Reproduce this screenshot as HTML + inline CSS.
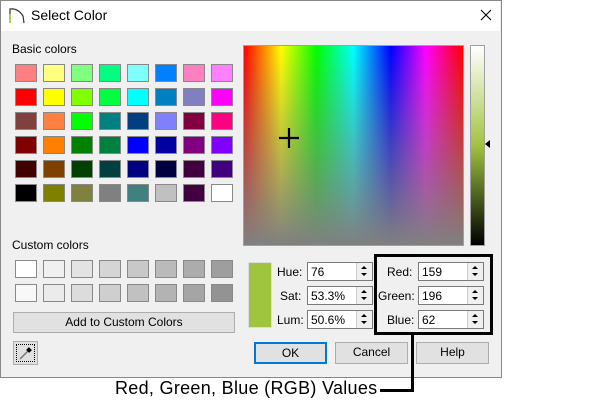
<!DOCTYPE html><html><head><style>
body{margin:0;width:602px;height:409px;background:#fff;position:relative;font-family:"Liberation Sans",sans-serif;overflow:hidden}
.a{position:absolute;box-sizing:border-box}
.dlg{left:0;top:0;width:502px;height:378px;background:#f0f0f0;border:1px solid #888}
.title{left:1px;top:1px;width:499px;height:30px;background:#fff}
.t{font-size:12px;color:#000;white-space:nowrap}
.sw{width:22px;height:18px;border:1px solid #888}
.ed{height:19px;background:#fff;border:1px solid #7a7a7a;font-size:12px;padding:2px 0 0 3px}
.sp{position:absolute;right:0;top:0;width:15px;height:17px;border-left:1px solid #ccc;background:#f0f0f0}
.sp:before{content:"";position:absolute;left:4px;top:3px;border:3px solid transparent;border-bottom:3px solid #000;border-top:0}
.sp:after{content:"";position:absolute;left:4px;top:10px;border:3px solid transparent;border-top:3px solid #000;border-bottom:0}
.btn{height:21px;background:#e1e1e1;border:1px solid #adadad;font-size:12px;text-align:center;line-height:19px}
</style></head><body>
<div class="a dlg"></div>
<div class="a title"></div>
<svg class="a" style="left:8px;top:6px" width="18" height="18"><path d="M2 17V3Q10 2 15 10L16 17" fill="none" stroke="#333" stroke-width="1.2"/><path d="M2 8V17" stroke="#9c3" stroke-width="1.5"/></svg>
<div class="a" style="left:31px;top:7px;font-size:14px">Select Color</div>
<svg class="a" style="left:480px;top:9px" width="12" height="12"><path d="M1 1L11 11M11 1L1 11" stroke="#000" stroke-width="1.1"/></svg>
<div class="a t" style="left:12px;top:42px">Basic colors</div>
<div id="g"></div>
<div class="a t" style="left:12px;top:238px">Custom colors</div>
<div class="a" style="left:243px;top:45px;width:221px;height:201px;border:1px solid #a0a0a0;background:linear-gradient(to bottom,rgba(128,128,128,0),rgb(128,128,128)),linear-gradient(to right,#f00,#ff0 17%,#0f0 33%,#0ff 50%,#00f 67%,#f0f 83%,#f00)"></div>
<svg class="a" style="left:279px;top:128px" width="20" height="20"><path d="M10 0V20M0 10H20" stroke="#000" stroke-width="2.2"/></svg>
<div class="a" style="left:470px;top:45px;width:15px;height:201px;border:1px solid #a0a0a0;background:linear-gradient(#fff,#9fc43e 50%,#000)"></div>
<div class="a" style="left:485px;top:140px;border:4px solid transparent;border-right:5px solid #000;border-left:0"></div>
<div class="a btn" style="left:13px;top:312px;width:222px">Add to Custom Colors</div>
<div class="a" style="left:13px;top:341px;width:25px;height:24px;border:1px solid #adadad;background:#e1e1e1"><div class="a" style="left:2px;top:2px;width:19px;height:18px;border:1px dotted #000"></div><svg class="a" style="left:4px;top:3px" width="16" height="16"><path d="M2 14L10 6" stroke="#777" stroke-width="1.5"/><path d="M9 4L12 7M10 3L13 6" stroke="#000" stroke-width="2.5"/></svg></div>
<div class="a" style="left:248px;top:262px;width:24px;height:66px;background:#9fc43e;border:1px solid #ddd"></div>
<div class="a t" style="left:277px;top:265px">Hue:</div>
<div class="a t" style="left:280px;top:289px">Sat:</div>
<div class="a t" style="left:277px;top:313px">Lum:</div>
<div class="a ed" style="left:307px;top:262px;width:66px">76<div class="sp"></div></div>
<div class="a ed" style="left:307px;top:286px;width:66px">53.3%<div class="sp"></div></div>
<div class="a ed" style="left:307px;top:310px;width:66px">50.6%<div class="sp"></div></div>
<div class="a t" style="left:387px;top:265px">Red:</div>
<div class="a t" style="left:378px;top:289px">Green:</div>
<div class="a t" style="left:387px;top:313px">Blue:</div>
<div class="a ed" style="left:418px;top:262px;width:66px">159<div class="sp"></div></div>
<div class="a ed" style="left:418px;top:286px;width:66px">196<div class="sp"></div></div>
<div class="a ed" style="left:418px;top:310px;width:66px">62<div class="sp"></div></div>
<div class="a" style="left:374px;top:254px;width:119px;height:81px;border:3px solid #000"></div>
<div class="a btn" style="left:254px;top:342px;width:73px;height:22px;border:2px solid #0078d7;line-height:18px">OK</div>
<div class="a btn" style="left:335px;top:342px;width:73px;height:22px">Cancel</div>
<div class="a btn" style="left:416px;top:342px;width:73px;height:22px">Help</div>
<div class="a" style="left:411px;top:334px;width:3px;height:58px;background:#000"></div>
<div class="a" style="left:380px;top:389px;width:34px;height:3px;background:#000"></div>
<div class="a" style="left:115px;top:378px;font-size:18px;letter-spacing:0.3px;white-space:nowrap">Red, Green, Blue (RGB) Values</div>
<script>
var b=[["#ff8080","#ffff80","#80ff80","#00ff80","#80ffff","#0080ff","#ff80c0","#ff80ff"],["#ff0000","#ffff00","#80ff00","#00ff40","#00ffff","#0080c0","#8080c0","#ff00ff"],["#804040","#ff8040","#00ff00","#008080","#004080","#8080ff","#800040","#ff0080"],["#800000","#ff8000","#008000","#008040","#0000ff","#0000a0","#800080","#8000ff"],["#400000","#804000","#004000","#004040","#000080","#000040","#400040","#400080"],["#000000","#808000","#808040","#808080","#408080","#c0c0c0","#400040","#ffffff"]];
var c=[["#fff","#f0f0f0","#e3e3e3","#d5d5d5","#c8c8c8","#bababa","#acacac","#9e9e9e"],["#f8f8f8","#ebebeb","#dcdcdc","#cfcfcf","#c1c1c1","#b3b3b3","#a5a5a5","#939393"]];
var h="",ys=[64,88,112,136,160,184];
b.forEach(function(r,i){r.forEach(function(x,j){h+='<div class="a sw" style="left:'+(15+j*28)+'px;top:'+ys[i]+'px;background:'+x+'"></div>'})});
c.forEach(function(r,i){r.forEach(function(x,j){h+='<div class="a sw" style="left:'+(15+j*28)+'px;top:'+(260+i*24)+'px;background:'+x+'"></div>'})});
document.getElementById("g").innerHTML=h;
</script>
</body></html>
